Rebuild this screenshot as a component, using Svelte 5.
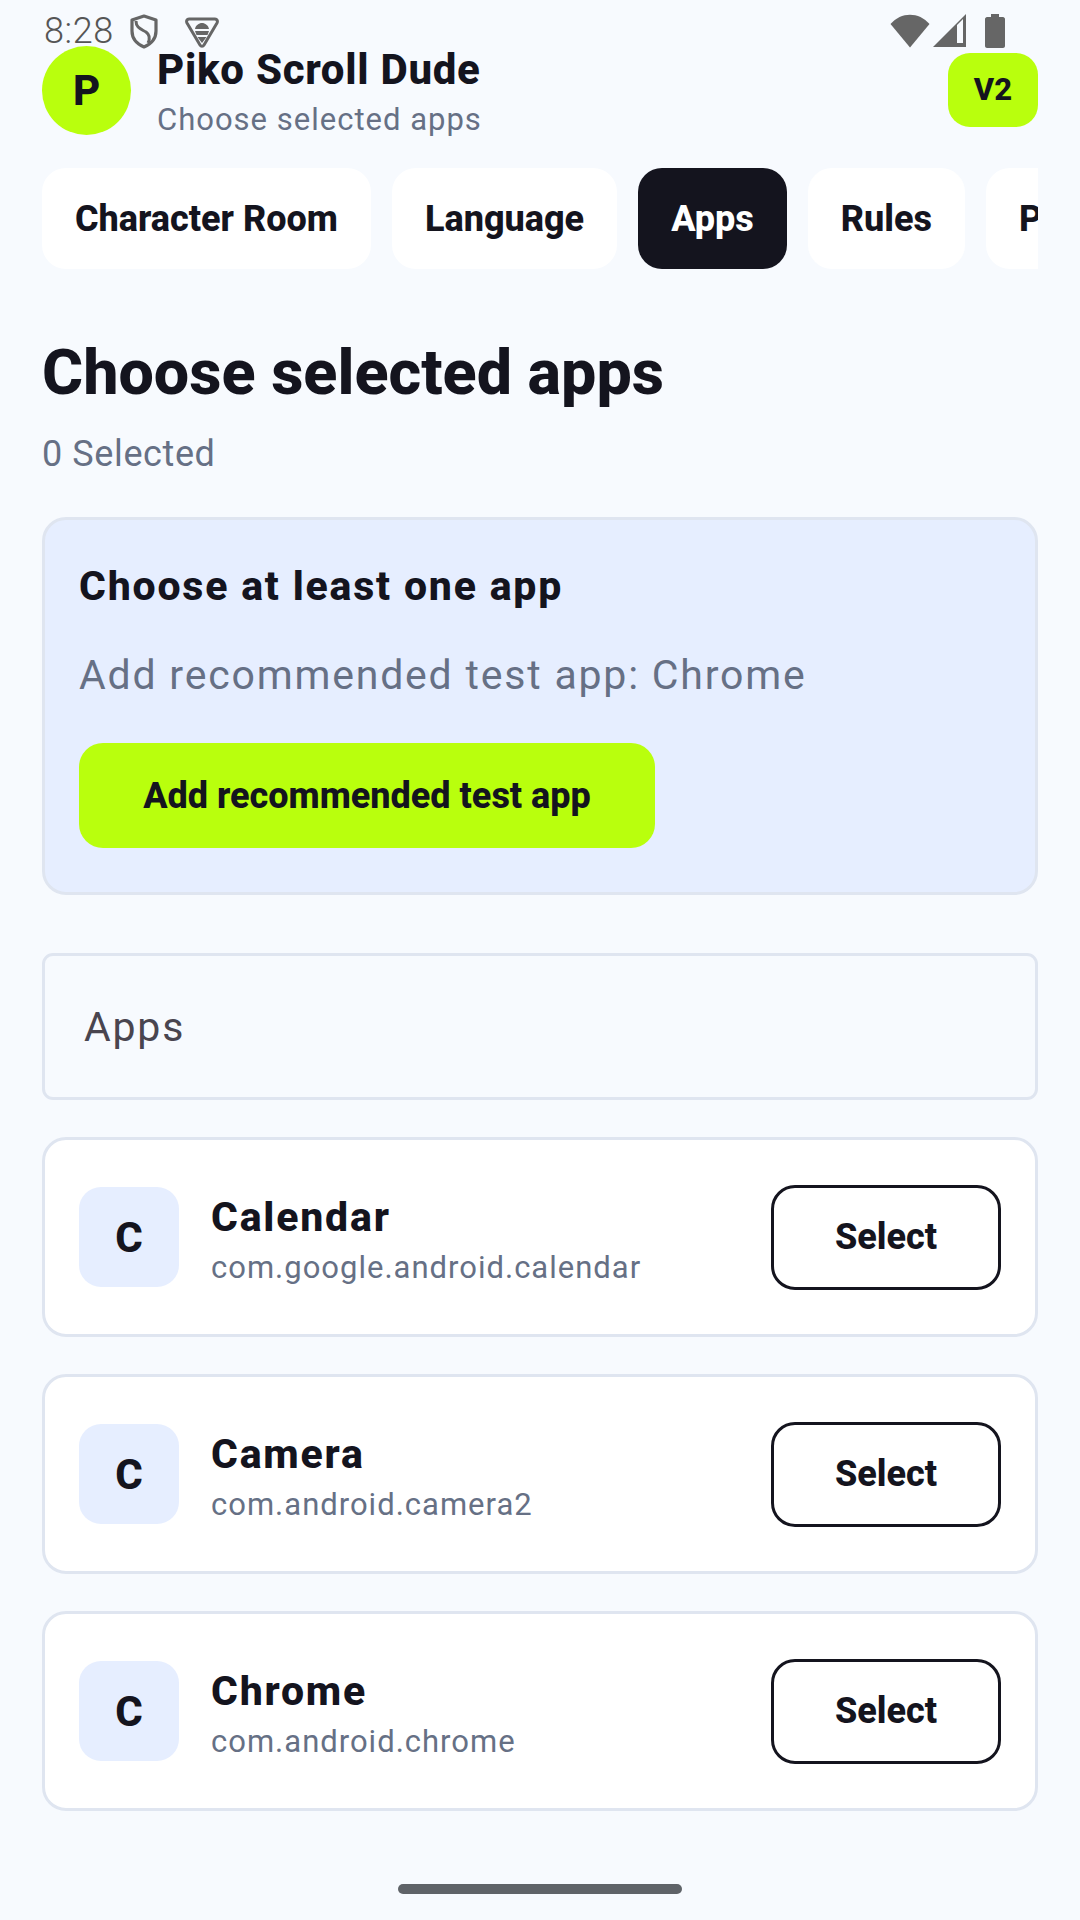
<script>
  const tabs = [
    { label: "Character Room" },
    { label: "Language" },
    { label: "Apps", active: true },
    { label: "Rules" },
    { label: "Preview" },
  ];

  const apps = [
    { name: "Calendar", pkg: "com.google.android.calendar" },
    { name: "Camera", pkg: "com.android.camera2" },
    { name: "Chrome", pkg: "com.android.chrome" },
  ];
</script>

<div class="screen">
  <!-- system bar sits over the app header -->
  <div class="status">
    <div class="status__left">
      <span class="status__time">8:28</span>
      <svg class="shield" viewBox="0 0 28 35" width="28" height="35">
        <path d="M14 2 L26 6 V17 C26 25 21 30 14 33 C7 30 2 25 2 17 V6 Z" fill="none" stroke="#666" stroke-width="3.2" stroke-linejoin="round" />
        <path d="M6 7 C6 14 11 15 16 18 C20 21 20 25 18 29" fill="none" stroke="#666" stroke-width="3" />
      </svg>
      <svg class="guard" viewBox="0 0 34 31" width="34" height="31">
        <path d="M4 2 H30 C32 2 33 4 32 6 L19 28 C18 29.6 16 29.6 15 28 L2 6 C1 4 2 2 4 2 Z" fill="none" stroke="#666" stroke-width="3" stroke-linejoin="round" />
        <path d="M10 12 C10.5 8.5 14 6 17 6 C20 6 23.5 8.5 24 12 Z M10 14 H24 L22.5 18 H11.5 Z M12.5 20 H21.5 L17 26 Z" fill="#666" />
      </svg>
    </div>
    <div class="status__right">
      <svg viewBox="0 0 40 34" width="40" height="34">
        <path d="M0.5 10 C11 -2.5 29 -2.5 39.5 10 L20 33.5 Z" fill="#666" />
      </svg>
      <svg viewBox="0 0 33 33" width="33" height="33">
        <path d="M0 33 L33 0 V33 Z M24 11 V29 H30 V5 Z" fill="#666" fill-rule="evenodd" />
      </svg>
      <svg class="battery" viewBox="0 0 20 34" width="20" height="34">
        <path d="M6 0 H14 V3 H18 C19 3 20 4 20 5 V32 C20 33 19 34 18 34 H2 C1 34 0 33 0 32 V5 C0 4 1 3 2 3 H6 Z" fill="#666" />
      </svg>
    </div>
  </div>

  <header class="top">
    <div class="avatar">P</div>
    <div class="top__text">
      <div class="top__title">Piko Scroll Dude</div>
      <div class="top__sub">Choose selected apps</div>
    </div>
    <div class="version">V2</div>
  </header>

  <nav class="tabs">
    {#each tabs as tab}
      <div class="tab" class:tab--active={tab.active}>{tab.label}</div>
    {/each}
  </nav>

  <h1 class="heading">Choose selected apps</h1>
  <div class="count">0 Selected</div>

  <section class="hint">
    <div class="hint__title">Choose at least one app</div>
    <div class="hint__text">Add recommended test app: Chrome</div>
    <div class="hint__btn">Add recommended test app</div>
  </section>

  <div class="search">Apps</div>

  <div class="list">
    {#each apps as app}
      <div class="app">
        <div class="app__icon">C</div>
        <div class="app__info">
          <div class="app__name">{app.name}</div>
          <div class="app__pkg">{app.pkg}</div>
        </div>
        <div class="app__select">Select</div>
      </div>
    {/each}
  </div>

  <div class="home"></div>
</div>

<style>
  :global(body) {
    margin: 0;
    background: #f7fafe;
  }

  .screen {
    position: relative;
    box-sizing: border-box;
    width: 1080px;
    height: 1920px;
    padding: 45px 42px 0;
    overflow: hidden;
    background: #f7fafe;
    color: #14141e;
    font-family: Roboto, "Noto Sans", sans-serif;
  }

  .status {
    position: absolute;
    top: 14px;
    left: 44px;
    right: 75px;
    display: flex;
    justify-content: space-between;
    align-items: flex-start;
  }

  .status__left {
    display: flex;
    align-items: flex-start;
  }

  .status__time {
    margin-top: -3px;
    font-size: 36px;
    line-height: 40px;
    font-weight: 300;
    letter-spacing: 0.6px;
    color: #555;
  }

  .shield {
    margin-left: 16px;
  }

  .guard {
    margin: 3px 0 0 27px;
  }

  .status__right {
    display: flex;
    align-items: flex-start;
    gap: 3px;
  }

  .battery {
    margin-left: 16px;
  }

  .top {
    display: flex;
    align-items: center;
    height: 90px;
  }

  .avatar {
    width: 89px;
    height: 89px;
    flex: none;
    display: flex;
    align-items: center;
    justify-content: center;
    border-radius: 50%;
    background: #b9ff0d;
    font-size: 42px;
    font-weight: 800;
  }

  .top__text {
    flex: 1;
    margin-left: 26px;
  }

  .top__title {
    margin-top: 3px;
    font-size: 42px;
    line-height: 52px;
    font-weight: 800;
    letter-spacing: 0.7px;
  }

  .top__sub {
    margin-top: 4px;
    font-size: 31px;
    line-height: 40px;
    letter-spacing: 1px;
    color: #667085;
  }

  .version {
    width: 90px;
    height: 74px;
    padding-bottom: 2px;
    box-sizing: border-box;
    display: flex;
    align-items: center;
    justify-content: center;
    border-radius: 22px;
    background: #b9ff0d;
    font-size: 31px;
    font-weight: 800;
  }

  .tabs {
    display: flex;
    gap: 21px;
    margin-top: 33px;
    overflow: hidden;
  }

  .tab {
    flex: none;
    height: 101px;
    padding: 0 33px;
    display: flex;
    align-items: center;
    border-radius: 24px;
    background: #fff;
    font-size: 36px;
    font-weight: 800;
  }

  .tab--active {
    background: #14141e;
    color: #fff;
  }

  .heading {
    margin: 69px 0 0;
    font-size: 62.8px;
    line-height: 70px;
    font-weight: 800;
  }

  .count {
    margin-top: 23px;
    font-size: 36px;
    line-height: 46px;
    letter-spacing: 0.6px;
    color: #667085;
  }

  .hint {
    box-sizing: border-box;
    height: 378px;
    margin-top: 40px;
    padding: 42px 34px 0;
    border: 3px solid #dfe5f0;
    border-radius: 24px;
    background: #e6eeff;
  }

  .hint__title {
    font-size: 41px;
    line-height: 48px;
    font-weight: 800;
    letter-spacing: 1.8px;
  }

  .hint__text {
    margin-top: 40px;
    font-size: 41px;
    line-height: 50px;
    letter-spacing: 1.8px;
    color: #667085;
  }

  .hint__btn {
    width: 576px;
    height: 105px;
    margin-top: 43px;
    display: flex;
    align-items: center;
    justify-content: center;
    border-radius: 24px;
    background: #b9ff0d;
    font-size: 36px;
    font-weight: 800;
  }

  .search {
    box-sizing: border-box;
    height: 147px;
    margin-top: 58px;
    padding: 0 39px;
    display: flex;
    align-items: center;
    border: 3px solid #dfe5f0;
    border-radius: 11px;
    font-size: 41px;
    letter-spacing: 1.8px;
    color: #49454f;
  }

  .list {
    display: flex;
    flex-direction: column;
    gap: 37px;
    margin-top: 37px;
  }

  .app {
    box-sizing: border-box;
    height: 200px;
    padding: 0 34px;
    display: flex;
    align-items: center;
    border: 3px solid #dfe5f0;
    border-radius: 24px;
    background: #fff;
  }

  .app__icon {
    width: 100px;
    height: 100px;
    flex: none;
    display: flex;
    align-items: center;
    justify-content: center;
    border-radius: 22px;
    background: #e6eeff;
    font-size: 42px;
    font-weight: 800;
  }

  .app__info {
    flex: 1;
    margin-left: 32px;
    padding-top: 5px;
  }

  .app__name {
    font-size: 41px;
    line-height: 50px;
    font-weight: 800;
    letter-spacing: 1.8px;
  }

  .app__pkg {
    margin-top: 6px;
    font-size: 31px;
    line-height: 40px;
    letter-spacing: 1px;
    color: #667085;
  }

  .app__select {
    box-sizing: border-box;
    width: 230px;
    height: 105px;
    display: flex;
    align-items: center;
    justify-content: center;
    border: 3px solid #14141e;
    border-radius: 24px;
    font-size: 36px;
    font-weight: 800;
  }

  .home {
    position: absolute;
    left: 398px;
    bottom: 26px;
    width: 284px;
    height: 10px;
    border-radius: 5px;
    background: #5f6368;
  }
</style>
